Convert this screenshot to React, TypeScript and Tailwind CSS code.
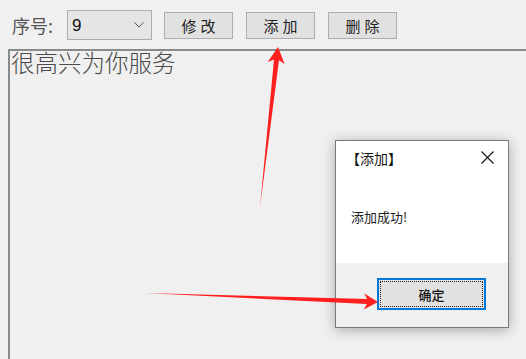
import React from "react";

const cjk = { fontFamily: '"Noto Sans CJK SC", "Noto Sans", sans-serif' };

function ToolButton({ label }: { label: string }) {
  return (
    <button
      className="w-[69px] h-[27px] bg-[#e1e1e1] border border-[#adadad] text-[15px] text-[#222] leading-none tracking-[4px] pl-[4px]"
      style={cjk}
    >
      {label}
    </button>
  );
}

export default function App() {
  return (
    <div className="relative w-[526px] h-[359px] overflow-hidden bg-[#f0f0f0]" style={cjk}>
      {/* toolbar */}
      <div className="flex items-center h-[30px] mt-[10px] pl-[12px]">
        <span className="w-[55px] text-[18px] text-[#555] leading-none">序号:</span>
        <div className="flex items-center justify-between w-[85px] h-[30px] bg-[#e5e5e5] border border-[#adadad] pl-[4px] pr-[7px]">
          <span className="text-[17px] text-[#111] leading-none" style={{ fontFamily: '"Liberation Sans", sans-serif' }}>
            9
          </span>
          <svg width="10" height="6" viewBox="0 0 10 6" fill="none" stroke="#555" strokeWidth="1">
            <path d="M0.5 0.5 L5 5 L9.5 0.5" />
          </svg>
        </div>
        <div className="flex items-center gap-[13px] ml-[12px]">
          <ToolButton label="修改" />
          <ToolButton label="添加" />
          <ToolButton label="删除" />
        </div>
      </div>

      {/* text area */}
      <div className="mt-[9px] ml-[8px] h-[320px] border-l-2 border-t-2 border-[#8a8a8a]">
        <div className="pl-[1px] text-[23.5px] leading-[22px] text-[#4a4a4a] font-light">很高兴为你服务</div>
      </div>

      {/* message box */}
      <div className="absolute left-[335px] top-[140px] w-[174px] h-[188px] flex flex-col bg-white border border-[#7a7a7a] shadow-[0_2px_12px_rgba(0,0,0,0.3)]">
        <div className="flex items-center justify-between h-[33px] pl-[10px] pr-[14px]">
          <span className="text-[14px] text-[#111] leading-none">【添加】</span>
          <svg width="13" height="13" viewBox="0 0 13 13" stroke="#111" strokeWidth="1.1">
            <path d="M0.5 0.5 L12.5 12.5 M12.5 0.5 L0.5 12.5" />
          </svg>
        </div>
        <div className="flex items-center h-[89px] pl-[15px] pb-[4px]">
          <span className="text-[13px] text-[#222] leading-none">添加成功!</span>
        </div>
        <div className="flex-1 bg-[#f0f0f0] pt-[15px] pl-[41px]">
          <div className="w-[109px] h-[32px] border-2 border-[#0078d7] bg-[#e1e1e1] p-[1px]">
            <div className="w-full h-full border border-dotted border-[#222] flex items-center justify-center">
              <span className="text-[13px] text-[#111] font-medium leading-none">确定</span>
            </div>
          </div>
        </div>
      </div>

      {/* annotation arrows */}
      <svg className="absolute left-0 top-0" width="526" height="359" viewBox="0 0 526 359">
        <polygon points="260,207 274,59.6 267.8,61.9 278,47 284.6,63.9 279,60.2" fill="#ff1f1f" />
        <polygon points="145,293 367.1,299.1 364.3,293.5 378,302 363.7,309.5 366.9,304.1" fill="#ff1f1f" />
      </svg>
    </div>
  );
}
